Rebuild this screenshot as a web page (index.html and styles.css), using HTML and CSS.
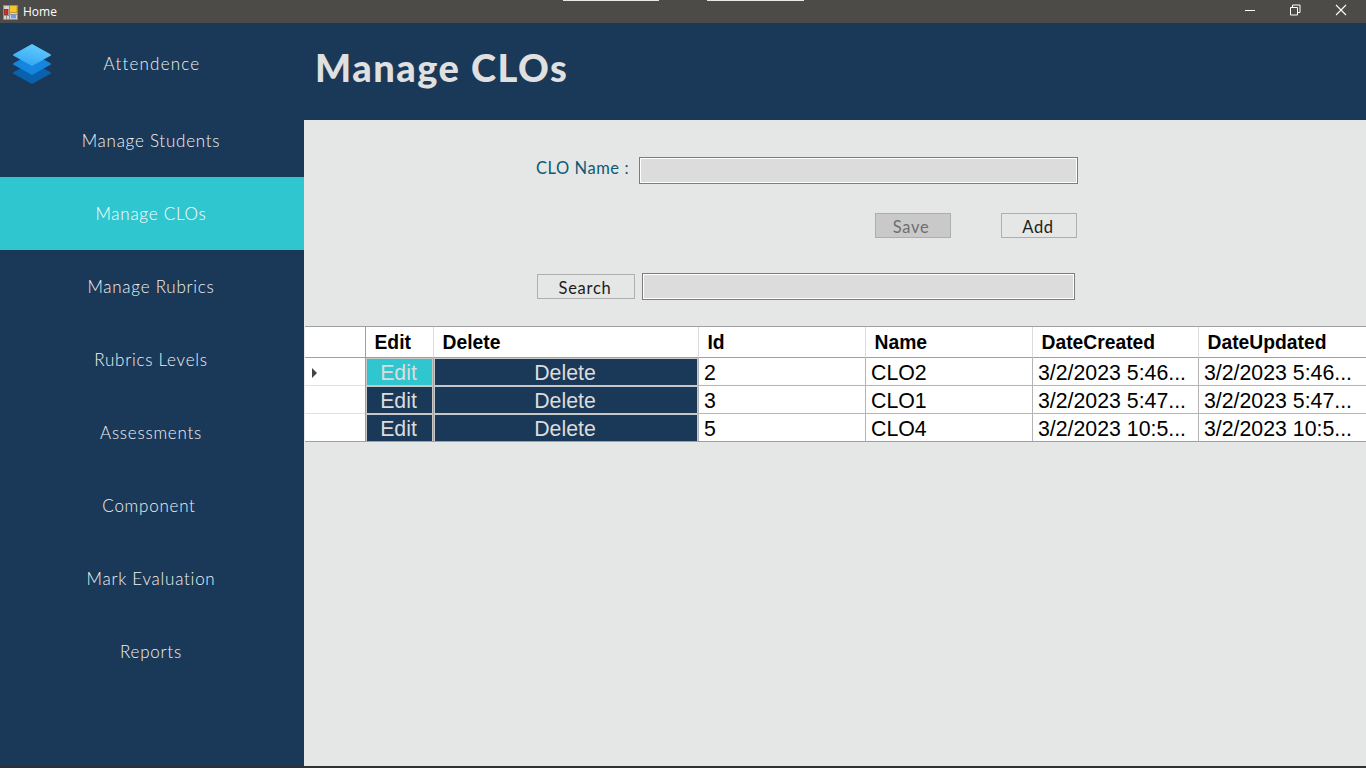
FILE: index.html
```html
<!DOCTYPE html>
<html lang="en">
<head>
<meta charset="utf-8">
<title>Home</title>
<link rel="stylesheet" href="styles.css">
</head>
<body>
<div class="window">
  <header class="titlebar">
    <span class="strip strip-a"></span>
    <span class="strip strip-b"></span>
    <svg class="app-icon" width="15" height="15" viewBox="0 0 15 15">
      <rect x="0.5" y="0.5" width="14" height="14" fill="#d4d4d4" stroke="#8a8a8a"/>
      <path d="M1 10.500h5M3.500 10v4M6.500 1v13M7 9.500h7" stroke="#7f7f7f" stroke-width="0.8" fill="none"/>
      <rect x="6.500" y="0.500" width="7.500" height="7" fill="#f6c52e" stroke="#a8861e" stroke-width="0.7"/>
      <rect x="1.500" y="4.500" width="3.500" height="5" fill="#dc2a22" stroke="#7c1a14" stroke-width="0.7"/>
      <rect x="8" y="9.800" width="5" height="3.500" fill="#6a9eea"/>
    </svg>
    <span class="app-title">Home</span>
    <div class="win-controls">
      <svg width="46" height="23" viewBox="0 0 46 23"><path d="M19 10.500h10" stroke="#fff" fill="none"/></svg>
      <svg width="46" height="23" viewBox="0 0 46 23"><path d="M18.500 7.500h7v7.500h-7zM20.500 7.500v-2.500h7.500v7.500h-2.500" stroke="#fff" fill="none"/></svg>
      <svg width="46" height="23" viewBox="0 0 46 23"><path d="M18 5l10 10M28 5l-10 10" stroke="#fff" stroke-width="1.100" fill="none"/></svg>
    </div>
  </header>
  <div class="app">
    <nav class="sidebar">
      <div class="brand-row">
        <svg class="logo" width="40" height="42" viewBox="0 0 40 42">
          <defs>
            <linearGradient id="topLayer" x1="0.700" y1="0" x2="0.300" y2="1">
              <stop offset="0" stop-color="#62ccff"/>
              <stop offset="1" stop-color="#35a6f2"/>
            </linearGradient>
          </defs>
          <path d="M20 20L38 30L20 40L2 30Z" fill="#0a62ad" stroke="#0a62ad" stroke-width="2" stroke-linejoin="round"/>
          <path d="M20 11L38 21L20 31L2 21Z" fill="#1486e0" stroke="#1486e0" stroke-width="2" stroke-linejoin="round"/>
          <path d="M20 2L38 12L20 22L2 12Z" fill="url(#topLayer)" stroke="url(#topLayer)" stroke-width="2" stroke-linejoin="round"/>
        </svg>
        <a class="nav-item brand-link">Attendence</a>
      </div>
      <a class="nav-item">Manage Students</a>
      <a class="nav-item active">Manage CLOs</a>
      <a class="nav-item">Manage Rubrics</a>
      <a class="nav-item">Rubrics Levels</a>
      <a class="nav-item">Assessments</a>
      <a class="nav-item nudge">Component</a>
      <a class="nav-item">Mark Evaluation</a>
      <a class="nav-item">Reports</a>
    </nav>
    <main class="content">
      <div class="page-head"><h1>Manage CLOs</h1></div>
      <section class="form">
        <div class="row name-row">
          <label class="label">CLO Name :</label>
          <div class="field name-field"></div>
        </div>
        <div class="row action-row">
          <button class="btn btn-save">Save</button>
          <button class="btn btn-add">Add</button>
        </div>
        <div class="row search-row">
          <button class="btn btn-search">Search</button>
          <div class="field search-field"></div>
        </div>
      </section>
      <table class="grid">
        <thead>
          <tr>
            <th class="c-rh"></th>
            <th class="c-edit">Edit</th>
            <th class="c-del">Delete</th>
            <th class="c-id">Id</th>
            <th class="c-name">Name</th>
            <th class="c-date">DateCreated</th>
            <th class="c-date2">DateUpdated</th>
          </tr>
        </thead>
        <tbody>
          <tr>
            <td class="rh"><span class="caret"></span></td>
            <td class="cmd"><span class="cmd-btn sel">Edit</span></td>
            <td class="cmd"><span class="cmd-btn">Delete</span></td>
            <td>2</td><td>CLO2</td><td>3/2/2023 5:46...</td><td>3/2/2023 5:46...</td>
          </tr>
          <tr>
            <td class="rh"></td>
            <td class="cmd"><span class="cmd-btn">Edit</span></td>
            <td class="cmd"><span class="cmd-btn">Delete</span></td>
            <td>3</td><td>CLO1</td><td>3/2/2023 5:47...</td><td>3/2/2023 5:47...</td>
          </tr>
          <tr>
            <td class="rh"></td>
            <td class="cmd"><span class="cmd-btn">Edit</span></td>
            <td class="cmd"><span class="cmd-btn">Delete</span></td>
            <td>5</td><td>CLO4</td><td>3/2/2023 10:5...</td><td>3/2/2023 10:5...</td>
          </tr>
        </tbody>
      </table>
    </main>
  </div>
</div>
</body>
</html>
```
FILE: styles.css
```css
* { box-sizing: border-box; }
html, body { margin: 0; padding: 0; }
body { width: 1366px; height: 768px; overflow: hidden; font-family: "Liberation Sans", Arial, sans-serif; }
.window { display: flex; flex-direction: column; height: 768px; }
.window::after { content: ""; flex: 0 0 2px; background: #2d3134; }

.titlebar { position: relative; flex: 0 0 23px; height: 23px; display: flex; align-items: center; background: #4d4b48; color: #fff; padding-left: 3px; }
.strip { position: absolute; top: 0; height: 1px; background: #e8e8e8; }
.strip-a { left: 563px; width: 96px; }
.strip-b { left: 707px; width: 97px; }
.app-icon { flex: none; margin-top: 1px; }
.app-title { margin-left: 5px; font: 12px "Open Sans", "Liberation Sans", sans-serif; }
.win-controls { margin-left: auto; display: flex; margin-right: 2px; }
.win-controls svg { display: block; }

.app { flex: 1; display: flex; min-height: 0; }
.sidebar { flex: 0 0 304px; background: #1a3857; display: flex; flex-direction: column; }
.brand-row { position: relative; height: 81px; display: flex; align-items: center; justify-content: center; }
.logo { position: absolute; left: 12px; top: 20px; }
.nav-item { height: 73px; display: flex; align-items: center; justify-content: center; padding-right: 2px; color: #f2f2f2; font: 300 17px "Lato", "Open Sans", sans-serif; letter-spacing: 0.750px; }
.brand-link { height: 81px; padding-left: 2px; letter-spacing: 1.200px; }
.nav-item.active { background: #2fc6cf; color: #fff; }
.nudge { padding-right: 6px; }

.content { flex: 1; background: #e5e7e6; min-width: 0; }
.page-head { height: 97px; background: #1a3857; display: flex; align-items: center; padding: 0 0 10px 11px; }
.page-head h1 { margin: 0; color: #e0e0e0; font: 900 38px "Lato", "Open Sans", sans-serif; letter-spacing: 1.500px; }

.form { height: 206px; padding-top: 37px; }
.row { display: flex; align-items: center; }
.name-row { height: 27px; padding-left: 232px; }
.label { width: 103px; margin-top: -6px; color: #0c5a74; font: 400 16.500px "Lato", sans-serif; letter-spacing: 0.550px; }
.field { height: 27px; background: #dcdcdc; border: 1px solid #7c7c7c; box-shadow: inset 0 0 0 1px #fff; }
.name-field { width: 439px; }
.action-row { margin-top: 29px; height: 25px; padding-left: 571px; }
.btn { height: 25px; padding: 2px 0 0; background: #e5e7e6; border: 1px solid #aeaeae; color: #1c1c1c; font: 400 16.500px "Lato", sans-serif; letter-spacing: 0.700px; }
.btn-save { width: 76px; background: #c9c9c9; color: #6f6f6f; padding-right: 4px; }
.btn-add { width: 76px; margin-left: 50px; padding-right: 2px; }
.search-row { margin-top: 35px; height: 27px; padding-left: 233px; }
.btn-search { width: 98px; padding-right: 2px; }
.search-field { width: 433px; margin-left: 7px; }

.grid { width: 1061px; margin-left: 1px; table-layout: fixed; border-collapse: separate; border-spacing: 0; background: #fff; color: #000; border-top: 1px solid #a0a0a0; border-bottom: 1px solid #a0a0a0; }
.c-rh { width: 60px; }
.c-edit { width: 68px; }
.c-del { width: 265px; }
.c-id { width: 167px; }
.c-name { width: 167px; }
.c-date { width: 166px; }
.c-date2 { width: 168px; }
.grid th { height: 31px; padding: 1px 0 0 8.500px; text-align: left; font-size: 19.300px; font-weight: bold; border-left: 1px solid #dcdcdc; border-bottom: 1px solid #a0a0a0; white-space: nowrap; }
.grid th.c-rh { border-left: 0; }
.grid th.c-edit { border-left: 1px solid #a0a0a0; }
.grid td { height: 28px; padding: 3px 0 0 5px; font-size: 21.300px; line-height: 24px; border-left: 1px solid #b4b4b4; border-bottom: 1px solid #b4b4b4; white-space: nowrap; overflow: hidden; }
.grid tbody tr:last-child td { height: 27px; border-bottom: 0; }
.grid td.rh { padding: 0 0 0 7px; border-left: 0; border-bottom-color: #e2e2e2; line-height: 24px; }
.grid td.cmd { padding: 0; background: #c8c8c8; border-left: 1px solid #a0a0a0; border-bottom: 0; vertical-align: top; }
.cmd-btn { display: block; height: 26px; margin: 1px; padding-right: 2px; background: #1a3857; color: #dcdcdc; text-align: center; line-height: 28px; font-size: 21.300px; }
.grid tbody tr:last-child .cmd-btn { margin-bottom: 0; }
.cmd-btn.sel { background: #2fc6cf; }
.caret { display: inline-block; width: 0; height: 0; border-left: 5px solid #444; border-top: 5px solid transparent; border-bottom: 5px solid transparent; vertical-align: middle; }
```
